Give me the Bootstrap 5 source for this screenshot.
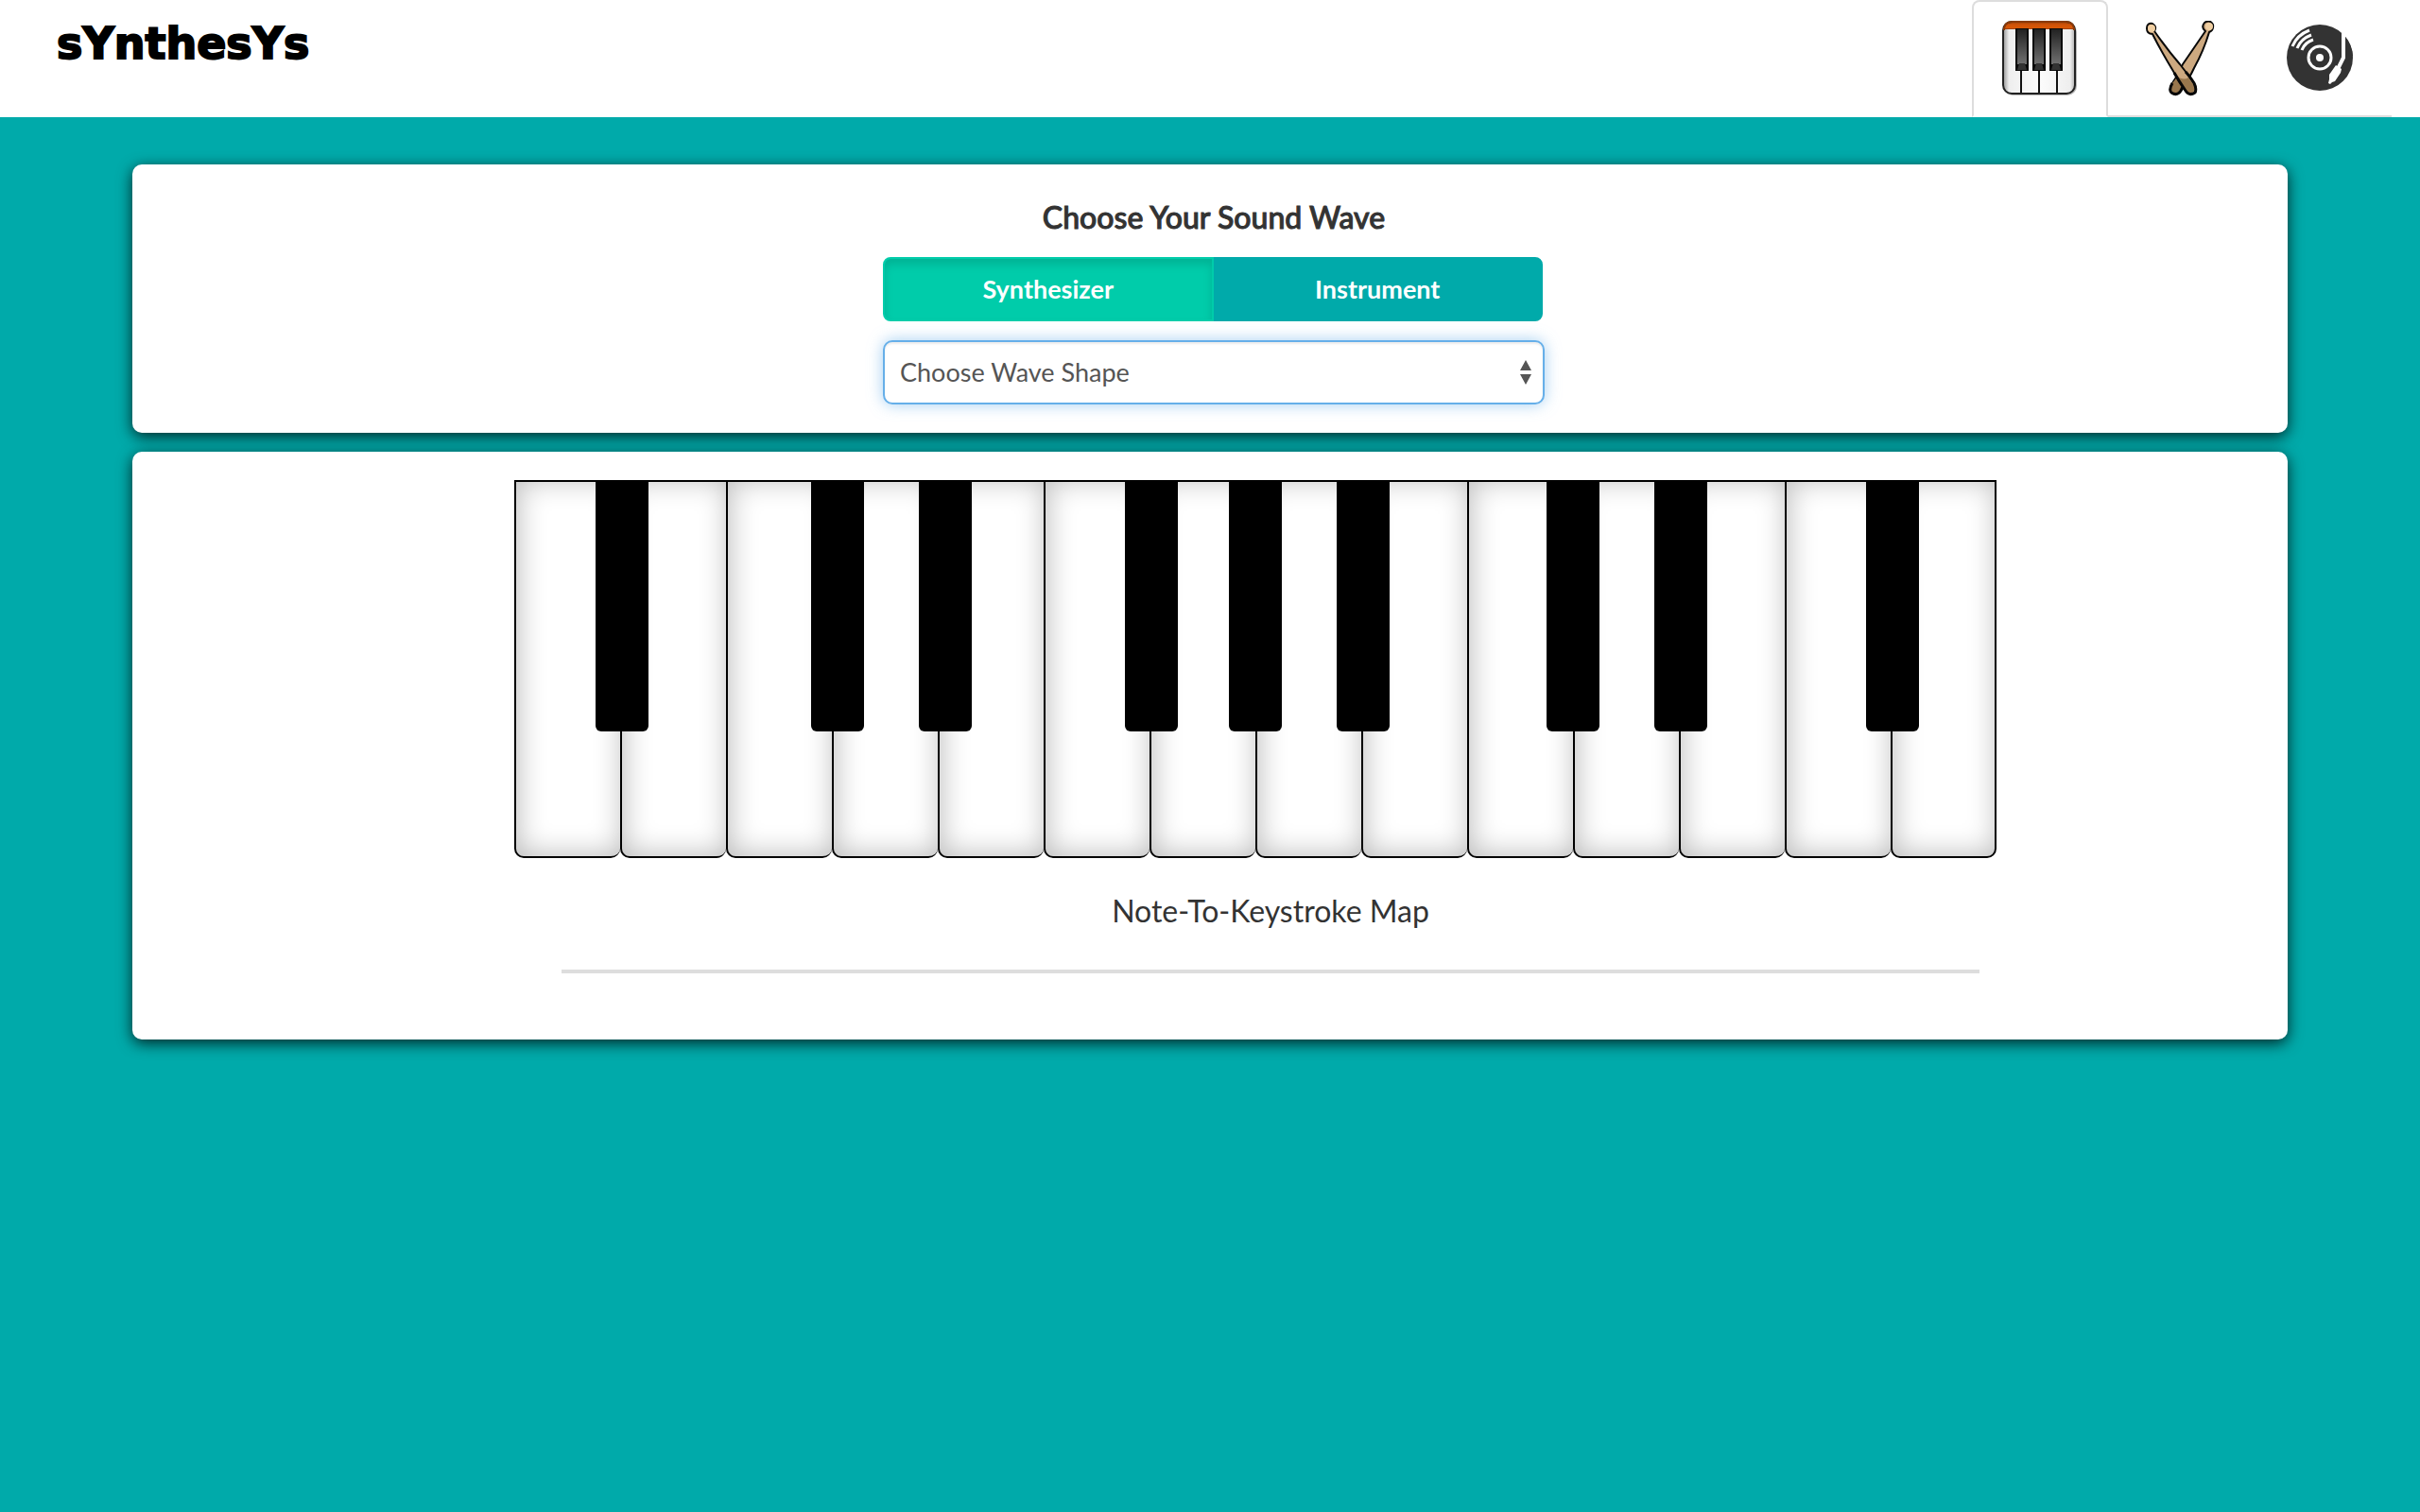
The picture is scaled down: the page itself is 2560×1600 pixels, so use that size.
<!DOCTYPE html>
<html lang="en">
<head>
<meta charset="utf-8">
<meta name="viewport" content="width=device-width, initial-scale=1">
<title>sYnthesYs</title>
<link href="https://cdn.jsdelivr.net/npm/bootstrap@5.3.0/dist/css/bootstrap.min.css" rel="stylesheet">
<style>
  body { background: #00aaaa; color: #333; font-family: Lato, "Open Sans", sans-serif; font-size: 27px; }
  .site-logo { font-family: "DejaVu Sans", sans-serif; font-weight: 700; font-size: 46px; line-height: 40px; color: #000; -webkit-text-stroke: 2px #000; padding: 26px 0 0 60px; }
  .site-tabs { --bs-nav-tabs-border-width: 2px; --bs-nav-tabs-border-color: #ddd; --bs-nav-tabs-border-radius: 8px; --bs-nav-tabs-link-active-border-color: #ddd #ddd #fff; margin-right: 30px; }
  .site-tabs .nav-item { margin-right: 4px; }
  .site-tabs .nav-link { padding: 20px 30px; }
  .site-tabs svg { display: block; width: 80px; height: 80px; }
  .site-main { max-width: 2280px; gap: 20px; padding: 50px 0; }
  .panel { background: #fff; border-radius: 10px; box-shadow: 0 4px 16px rgba(0, 0, 0, .78); }
  .wave-panel { padding: 36px 0 30px 8px; }
  .wave-form { max-width: 700px; }
  .wave-title { font-size: 32px; line-height: 40px; font-weight: 500; -webkit-text-stroke: 1px #333; margin-bottom: 22px; }
  .wave-group { margin: 0 2px 20px 0; }
  .wave-group .btn { --bs-btn-border-width: 2px; --bs-btn-border-radius: 8px; --bs-btn-color: #fff; --bs-btn-bg: #00aaaa; --bs-btn-border-color: #00aaaa; --bs-btn-hover-color: #fff; --bs-btn-hover-bg: #009999; --bs-btn-active-color: #fff; --bs-btn-active-bg: #00ccaa; --bs-btn-active-border-color: #00ccaa; height: 68px; flex: 1 1 0; font-size: 27px; font-weight: 700; line-height: 40px; padding: 12px; }
  .wave-group .btn + .btn { margin-left: -2px; }
  .wave-group .btn.active { box-shadow: inset 0 6px 10px rgba(0, 0, 0, .125); }
  .wave-select { height: 68px; border: 2px solid #66afe9; border-radius: 10px; padding: 0 48px 0 16px; font-size: 27px; color: #555; background-size: 12px 26px; background-position: right 12px center; background-image: url("data:image/svg+xml,%3Csvg xmlns='http://www.w3.org/2000/svg' viewBox='0 0 12 26'%3E%3Cpath fill='%23555' d='M0 11 6 0l6 11zM0 15h12L6 26z'/%3E%3C/svg%3E"); box-shadow: inset 0 2px 2px rgba(0, 0, 0, .075), 0 0 16px rgba(102, 175, 233, .6); }
  .piano-panel { padding: 30px 136px 70px 404px; }
  .piano-area { max-width: 1600px; }
  .keyboard { max-width: 1568px; height: 400px; }
  .key-slot { flex: 1 1 0; position: relative; }
  .key-white { display: block; width: 100%; height: 100%; padding: 0; background: #fff; border: 2px solid #000; border-right-width: 0; border-radius: 0 0 10px 10px; box-shadow: inset 2px -2px 30px rgba(0, 0, 0, .27); }
  .key-slot:last-child .key-white { border-right-width: 2px; }
  .key-black { position: absolute; top: 0; left: 86px; z-index: 1; width: 56px; height: 266px; padding: 0; border: 0; background: #000; border-radius: 0 0 6px 6px; }
  .key-black.shift-right { left: 90px; }
  .key-black.shift-far { left: 92px; }
  .key-black.shift-left { left: 84px; }
  .map-title { font-size: 32px; line-height: 40px; font-weight: 400; margin: 36px 0 42px; }
  .map-line { border-top: 4px solid #ddd; opacity: 1; margin: 0 50px; }
</style>
</head>
<body>
<header class="bg-white d-flex justify-content-between align-items-start">
  <a class="site-logo text-decoration-none" href="#">sYnthesYs</a>
  <ul class="nav nav-tabs site-tabs flex-nowrap">
    <li class="nav-item"><a class="nav-link active" href="#piano" aria-label="Piano" aria-current="page">
      <svg viewBox="0 0 80 80" aria-hidden="true">
        <defs>
          <linearGradient id="orange" x1="0" y1="0" x2="0" y2="1"><stop offset="0" stop-color="#8a3a08"/><stop offset=".45" stop-color="#d05208"/><stop offset=".9" stop-color="#d85805"/><stop offset="1" stop-color="#5a2400"/></linearGradient>
          <linearGradient id="ivory" x1="0" y1="0" x2="1" y2="0"><stop offset="0" stop-color="#888"/><stop offset=".09" stop-color="#eee"/><stop offset=".5" stop-color="#fcfcfc"/><stop offset=".9" stop-color="#eee"/><stop offset="1" stop-color="#888"/></linearGradient>
          <linearGradient id="ebony" x1="0" y1="0" x2="0" y2="1"><stop offset="0" stop-color="#222"/><stop offset="1" stop-color="#707070"/></linearGradient>
          <clipPath id="pianoBody"><rect x="1" y="1" width="76" height="76" rx="9"/></clipPath>
        </defs>
        <rect x="1" y="2" width="78" height="77" rx="10" fill="#888" opacity=".6"/>
        <g clip-path="url(#pianoBody)">
          <rect width="80" height="80" fill="url(#ivory)"/>
          <rect width="80" height="9" fill="url(#orange)"/>
          <path d="M20 50v28M39 50v28M58 50v28" stroke="#111" stroke-width="2"/>
          <path d="M14 8h14v45H14zM32 8h14v45H32zM50 8h14v45H50z" fill="#080808"/>
          <path d="M16 9h10v37H16zM34 9h10v37H34zM52 9h10v37H52z" fill="url(#ebony)"/>
          <path d="M16 52l2-7h6l2 7zM34 52l2-7h6l2 7zM52 52l2-7h6l2 7z" fill="#333"/>
        </g>
        <rect x="1" y="1" width="76" height="76" rx="9" fill="none" stroke="#222" stroke-width="2"/>
        <path d="M2 10V8q1-7 9-7h56q8 0 9 7v2" fill="none" stroke="#8a3a08" stroke-width="2"/>
      </svg></a></li>
    <li class="nav-item"><a class="nav-link" href="#drums" aria-label="Drums">
      <svg viewBox="0 0 80 80" aria-hidden="true" stroke="#080808" stroke-width="2" stroke-linejoin="round">
        <path d="M67 11 Q62 7 66 2 Q72-2 75 4 Q76 10 71 12 Q65 32 55 50 Q50 61 44 68 L41 74 Q37 80 31 76 Q28 73 32 66 Q39 56 43 46 Z" fill="#cda980"/>
        <path d="M36 61 Q46 65 41 73 Q37 80 31 76 Q28 73 32 66 Z" fill="#99774d" stroke="none"/>
        <path d="M13 11 Q16 6 11 3 Q5 2 5 8 Q5 14 11 14 Q20 32 34 55 Q39 64 46 74 Q50 80 56 76 Q58 72 55 66 Q48 56 40 46 Q27 31 13 11 Z" fill="#cda980"/>
        <path d="M36 58 Q44 64 49 60 Q53 66 55 69 Q57 73 53 76 Q48 77 45 72 Z" fill="#99774d" stroke="none"/>
        <circle cx="10" cy="8" r="4" fill="#f0cfa2" stroke="none"/><circle cx="71" cy="6" r="4" fill="#f0cfa2" stroke="none"/>
        <path d="M32 66 Q28 73 31 76 Q37 80 41 74L43 70M34 55 Q39 64 46 74 Q50 80 56 76 Q58 72 55 66 Q50 58 46 54" fill="none" stroke-width="3"/>
      </svg></a></li>
    <li class="nav-item"><a class="nav-link" href="#turntable" aria-label="Turntable">
      <svg viewBox="0 0 80 80" aria-hidden="true">
        <circle cx="40" cy="39" r="35" fill="#333"/>
        <path d="M62 10V0h12v24z" fill="#fff"/>
        <path d="M67 17Q74 26 75 37L67 45z" fill="#333"/>
        <circle cx="40" cy="39" r="12" fill="none" stroke="#fff" stroke-width="3"/>
        <circle cx="40" cy="39" r="4" fill="#fff"/>
        <path d="M11 27Q16 15 29 10M16 29Q20 19 31 15M21 31Q24 23 33 20" fill="none" stroke="#fff" stroke-width="3"/>
        <path d="M65 8v31l-6 12" fill="none" stroke="#fff" stroke-width="4"/>
        <path d="M57 47l6 4-1 4-6 9-3 1-2 2-2-1 1-4 0-5z" fill="#fff"/>
      </svg></a></li>
  </ul>
</header>

<main class="site-main container-fluid d-flex flex-column">
  <section class="panel wave-panel">
    <form class="wave-form mx-auto">
      <h1 class="wave-title text-center"><label for="wave">Choose Your Sound Wave</label></h1>
      <div class="wave-group d-flex btn-group" role="group" aria-label="Sound source">
        <button type="button" class="btn active" aria-pressed="true">Synthesizer</button>
        <button type="button" class="btn" aria-pressed="false">Instrument</button>
      </div>
      <select class="form-select wave-select" id="wave"><option>Choose Wave Shape</option></select>
    </form>
  </section>

  <section class="panel piano-panel" id="piano">
    <div class="piano-area">
      <div class="keyboard d-flex">
        <div class="key-slot"><button class="key-white" aria-label="C"></button><button class="key-black" aria-label="C sharp"></button></div>
        <div class="key-slot"><button class="key-white" aria-label="D"></button></div>
        <div class="key-slot"><button class="key-white" aria-label="E"></button><button class="key-black shift-right" aria-label="E sharp"></button></div>
        <div class="key-slot"><button class="key-white" aria-label="F"></button><button class="key-black shift-far" aria-label="F sharp"></button></div>
        <div class="key-slot"><button class="key-white" aria-label="G"></button></div>
        <div class="key-slot"><button class="key-white" aria-label="A"></button><button class="key-black" aria-label="A sharp"></button></div>
        <div class="key-slot"><button class="key-white" aria-label="B"></button><button class="key-black shift-left" aria-label="B sharp"></button></div>
        <div class="key-slot"><button class="key-white" aria-label="High C"></button><button class="key-black" aria-label="High C sharp"></button></div>
        <div class="key-slot"><button class="key-white" aria-label="High D"></button></div>
        <div class="key-slot"><button class="key-white" aria-label="High E"></button><button class="key-black shift-left" aria-label="High E sharp"></button></div>
        <div class="key-slot"><button class="key-white" aria-label="High F"></button><button class="key-black" aria-label="High F sharp"></button></div>
        <div class="key-slot"><button class="key-white" aria-label="High G"></button></div>
        <div class="key-slot"><button class="key-white" aria-label="High A"></button><button class="key-black" aria-label="High A sharp"></button></div>
        <div class="key-slot"><button class="key-white" aria-label="High B"></button></div>
      </div>
      <h2 class="map-title text-center">Note-To-Keystroke Map</h2>
      <hr class="map-line">
    </div>
  </section>
</main>
<script src="https://cdn.jsdelivr.net/npm/bootstrap@5.3.0/dist/js/bootstrap.bundle.min.js"></script>
</body>
</html>
